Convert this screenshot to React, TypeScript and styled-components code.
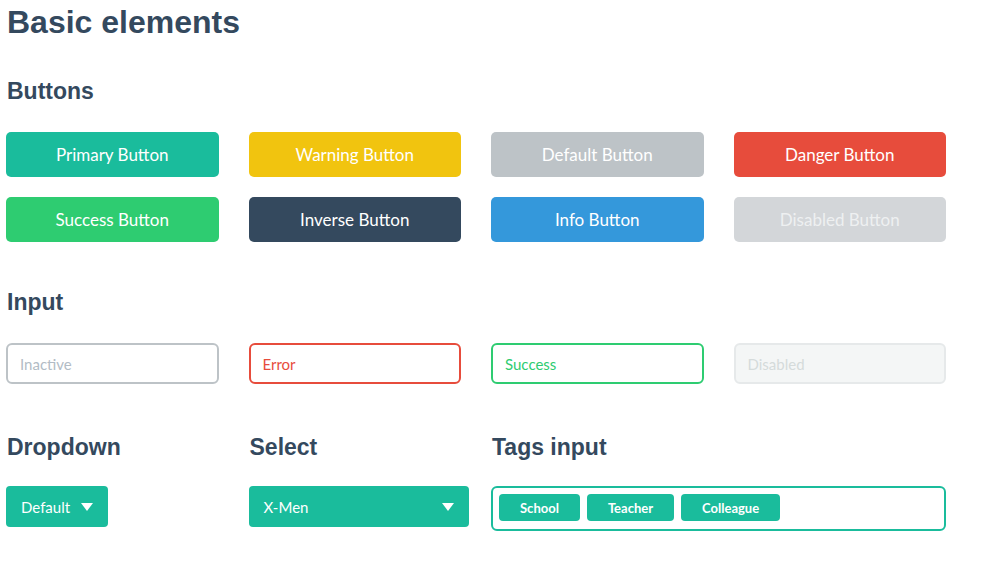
import React from "react";
import styled, { createGlobalStyle } from "styled-components";

const Global = createGlobalStyle`
  html, body { margin: 0; padding: 0; background: #ffffff; }
  body { font-family: "Lato", "Liberation Sans", sans-serif; color: #34495e; }
`;

const Page = styled.div`
  padding: 4px 0 0 6px;
  width: 940px;
`;

const Title = styled.h1`
  margin: 0;
  font-family: "Liberation Sans", Arial, sans-serif;
  font-weight: 700;
  font-size: 32px;
  line-height: 36px;
  color: #34495e;
  padding-left: 1px;
`;

const Heading = styled.h2<{ $top: number; $bottom: number }>`
  margin: ${(p) => p.$top}px 0 ${(p) => p.$bottom}px;
  font-family: "Liberation Sans", Arial, sans-serif;
  font-weight: 700;
  font-size: 23px;
  line-height: 28px;
  color: #34495e;
  padding-left: 1px;
`;

const Grid = styled.div<{ $rowGap?: number; $top?: number }>`
  display: grid;
  grid-template-columns: repeat(4, minmax(0, 1fr));
  column-gap: 30px;
  row-gap: ${(p) => p.$rowGap ?? 0}px;
  margin-top: ${(p) => p.$top ?? 0}px;
`;

const BTN: Record<string, { bg: string; fg: string }> = {
  primary: { bg: "#1abc9c", fg: "#ffffff" },
  warning: { bg: "#f1c40f", fg: "#ffffff" },
  default: { bg: "#bdc3c7", fg: "#ffffff" },
  danger: { bg: "#e74c3c", fg: "#ffffff" },
  success: { bg: "#2ecc71", fg: "#ffffff" },
  inverse: { bg: "#34495e", fg: "#ffffff" },
  info: { bg: "#3498db", fg: "#ffffff" },
  disabled: { bg: "#d3d6d9", fg: "#eef0f1" },
};

const Button = styled.button<{ $kind: string }>`
  height: 45px;
  border: none;
  border-radius: 5px;
  background: ${(p) => BTN[p.$kind].bg};
  color: ${(p) => BTN[p.$kind].fg};
  font-family: "Lato", sans-serif;
  font-size: 17px;
  padding: 0;
  display: flex;
  align-items: center;
  justify-content: center;
`;

const INP: Record<string, { border: string; fg: string; bg: string }> = {
  inactive: { border: "#bdc3c7", fg: "#b2bcc5", bg: "#ffffff" },
  error: { border: "#e74c3c", fg: "#e74c3c", bg: "#ffffff" },
  success: { border: "#2ecc71", fg: "#2ecc71", bg: "#ffffff" },
  disabled: { border: "#e6e9ea", fg: "#d5dbdb", bg: "#f4f6f6" },
};

const Field = styled.div<{ $kind: string }>`
  height: 41px;
  box-sizing: border-box;
  border: 2px solid ${(p) => INP[p.$kind].border};
  background: ${(p) => INP[p.$kind].bg};
  color: ${(p) => INP[p.$kind].fg};
  border-radius: 6px;
  padding: 0 12px;
  font-family: "Lato", sans-serif;
  font-size: 15px;
  display: flex;
  align-items: center;
`;

const Col = styled.div<{ $span?: number }>`
  grid-column: span ${(p) => p.$span ?? 1};
  display: flex;
  flex-direction: column;
  align-items: flex-start;
`;

const ColHeading = styled.h2`
  margin: 0 0 25px;
  font-family: "Liberation Sans", Arial, sans-serif;
  font-weight: 700;
  font-size: 23px;
  line-height: 28px;
  color: #34495e;
  padding-left: 1px;
`;

const DropButton = styled.div<{ $width?: number }>`
  height: 41px;
  box-sizing: border-box;
  width: ${(p) => (p.$width ? `${p.$width}px` : "auto")};
  flex-shrink: 0;
  background: #1abc9c;
  color: #ffffff;
  border-radius: 4px;
  padding: 0 15px;
  display: flex;
  align-items: center;
  justify-content: space-between;
  gap: 11px;
  font-family: "Lato", sans-serif;
  font-size: 15px;
  white-space: nowrap;
`;

const Caret = styled.span`
  width: 0;
  height: 0;
  border-left: 6px solid transparent;
  border-right: 6px solid transparent;
  border-top: 8px solid #ffffff;
  margin-top: 1px;
`;

const TagsBox = styled.div`
  width: 100%;
  height: 45px;
  box-sizing: border-box;
  border: 2px solid #1abc9c;
  border-radius: 6px;
  padding: 6px;
  display: flex;
  gap: 7px;
  align-items: flex-start;
`;

const Tag = styled.span`
  height: 27px;
  box-sizing: border-box;
  background: #1abc9c;
  color: #ffffff;
  border-radius: 4px;
  padding: 0 21px;
  display: flex;
  align-items: center;
  font-family: "Lato", sans-serif;
  font-weight: 700;
  font-size: 13px;
`;

export default function App() {
  return (
    <>
      <Global />
      <Page>
        <Title>Basic elements</Title>
        <Heading $top={37} $bottom={27}>Buttons</Heading>
        <Grid $rowGap={20}>
          <Button $kind="primary">Primary Button</Button>
          <Button $kind="warning">Warning Button</Button>
          <Button $kind="default">Default Button</Button>
          <Button $kind="danger">Danger Button</Button>
          <Button $kind="success">Success Button</Button>
          <Button $kind="inverse">Inverse Button</Button>
          <Button $kind="info">Info Button</Button>
          <Button $kind="disabled">Disabled Button</Button>
        </Grid>
        <Heading $top={46} $bottom={27}>Input</Heading>
        <Grid>
          <Field $kind="inactive">Inactive</Field>
          <Field $kind="error">Error</Field>
          <Field $kind="success">Success</Field>
          <Field $kind="disabled">Disabled</Field>
        </Grid>
        <Grid $top={49}>
          <Col>
            <ColHeading>Dropdown</ColHeading>
            <DropButton>
              Default
              <Caret />
            </DropButton>
          </Col>
          <Col>
            <ColHeading>Select</ColHeading>
            <DropButton $width={220}>
              X-Men
              <Caret />
            </DropButton>
          </Col>
          <Col $span={2}>
            <ColHeading>Tags input</ColHeading>
            <TagsBox>
              <Tag>School</Tag>
              <Tag>Teacher</Tag>
              <Tag>Colleague</Tag>
            </TagsBox>
          </Col>
        </Grid>
      </Page>
    </>
  );
}
